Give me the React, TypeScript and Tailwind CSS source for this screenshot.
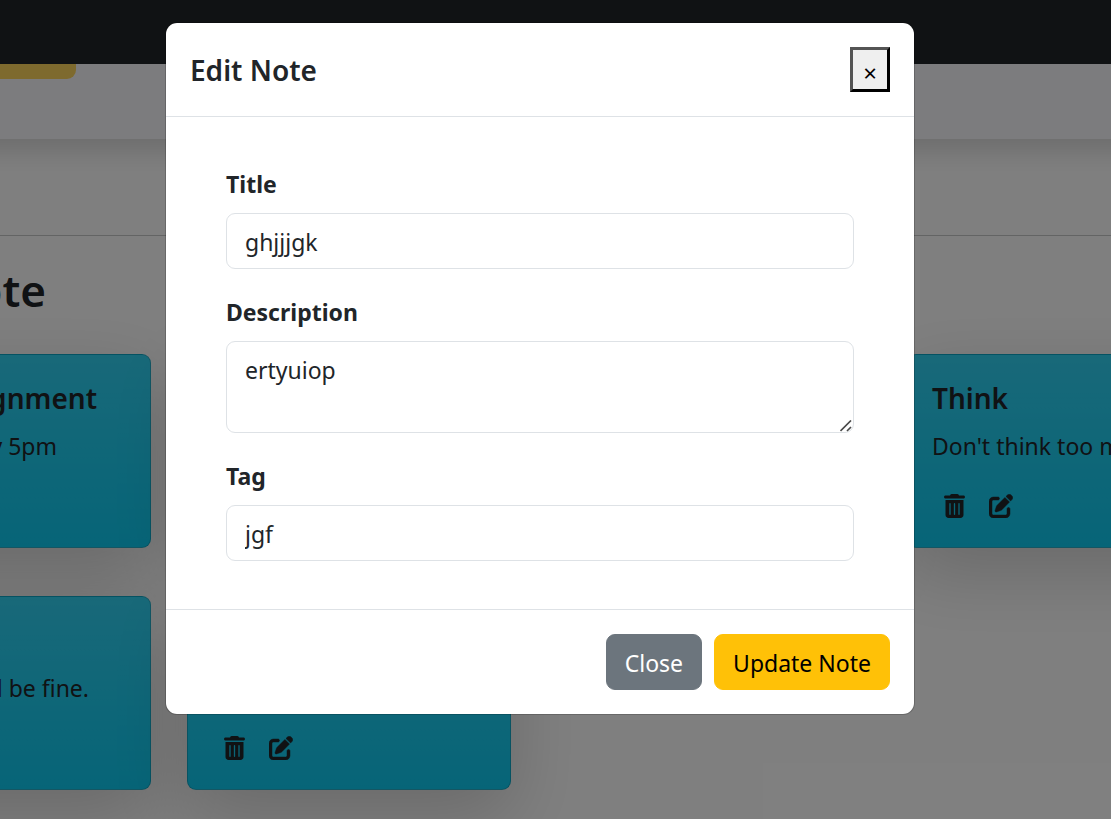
import React from "react";
import { FaPenToSquare } from "react-icons/fa6";

type Note = { title: string; text: string; inset?: string; textInset?: string };

const notes: Note[] = [
  { title: "Assignment", text: "by 5pm", inset: "text-right pr-[29px]", textInset: "text-right pr-[69px]" },
  { title: "Edit", text: "Note" },
  { title: "Note", text: "Note" },
  { title: "Think", text: "Don't think too much" },
  { title: "Note", text: "It will be fine.", inset: "text-left", textInset: "text-right pr-[37px]" },
  { title: "ghjjjgk", text: "ertyuiop" },
];

function TrashIcon() {
  return (
    <svg aria-hidden="true" viewBox="0 0 448 512" className="h-6 w-[21px]" fill="currentColor">
      <path d="M135 18C141 7 152 0 164 0h120c12 0 23 7 29 18l7 14h96c18 0 32 14 32 32s-14 32-32 32H32C14 96 0 82 0 64s14-32 32-32h96z" />
      <path
        fillRule="evenodd"
        d="M32 128h384v320c0 35-29 64-64 64H96c-35 0-64-29-64-64zM128 192c-8 0-14 6-14 14v228c0 8 6 14 14 14s14-6 14-14V206c0-8-6-14-14-14zM224 192c-8 0-14 6-14 14v228c0 8 6 14 14 14s14-6 14-14V206c0-8-6-14-14-14zM320 192c-8 0-14 6-14 14v228c0 8 6 14 14 14s14-6 14-14V206c0-8-6-14-14-14z"
      />
    </svg>
  );
}

function NoteCard({ note }: { note: Note }) {
  return (
    <article className="h-[194px] rounded-[9px] border border-black/18 bg-[#0dcaf0] bg-linear-to-b from-white/15 to-transparent px-6 pt-[25px] shadow-[0_24px_72px_rgba(0,0,0,0.175)]">
      <h5 className={`mb-3 text-[28px] font-semibold leading-9 whitespace-nowrap ${note.inset ?? ""}`}>{note.title}</h5>
      <p className={`mb-[30px] text-[23px] leading-9 whitespace-nowrap ${note.textInset ?? ""}`}>{note.text}</p>
      <div className="flex gap-6 pl-3">
        <button type="button" aria-label="Delete note"><TrashIcon /></button>
        <button type="button" aria-label="Edit note"><FaPenToSquare strokeWidth={10} className="size-6" /></button>
      </div>
    </article>
  );
}

function Field({ id, label, children }: { id: string; label: string; children: React.ReactNode }) {
  return (
    <div>
      <label htmlFor={id} className="mb-[11px] block text-[23px] font-bold leading-9">{label}</label>
      {children}
    </div>
  );
}

const control =
  "block w-full rounded-[9px] border border-[#dee2e6] bg-white px-[18px] pt-[10px] pb-2 text-[23px] leading-9 text-[#212529] outline-none";

const action = "rounded-[9px] border px-[18px] pt-[10px] pb-2 text-[23px] leading-9";

export default function App() {
  return (
    <div className="relative h-screen overflow-hidden bg-white font-['Noto_Sans','Open_Sans',sans-serif] text-[#212529]">
      <header className="h-16 bg-[#212529]" />
      <section className="-mx-12 h-[75px] bg-[#f9f9fd] px-12 shadow-[0_12px_24px_rgba(0,0,0,0.15)]">
        <button type="button" disabled aria-label="Add note" className="block h-[15px] w-[76px] rounded-br-[9px] bg-[#ffc107] opacity-65" />
      </section>
      <hr className="mt-24 border-t border-[#212529] opacity-25" />
      <main className="-ml-[173px] pt-[25px]">
        <h2 className="mb-[35px] flex w-[219px] justify-end text-[44px] font-semibold leading-[58px] whitespace-nowrap">Your Note</h2>
        <div className="grid grid-cols-[repeat(4,324px)] gap-x-9 gap-y-12">
          {notes.map((note, i) => <NoteCard key={i} note={note} />)}
        </div>
      </main>

      <div className="absolute inset-0 flex items-start justify-center bg-black/50 pt-[22px] pr-[31px]">
        <div role="dialog" aria-modal="true" aria-labelledby="dialog-title" className="w-full max-w-[750px] rounded-xl border border-black/18 bg-white bg-clip-padding">
          <div className="flex items-center justify-between border-b border-[#dee2e6] p-6">
            <h5 id="dialog-title" className="pt-px text-[28px] font-semibold leading-[44px]">Edit Note</h5>
            <button type="button" aria-label="Close dialog" className="h-[45px] w-10 border-3 border-black bg-[#efefef] pt-[5px] text-2xl leading-9 text-black [border-style:outset]">
              <span aria-hidden="true">×</span>
            </button>
          </div>
          <form className="flex flex-col gap-[25px] px-[60px] pt-[49px] pb-12">
            <Field id="title" label="Title">
              <input id="title" type="text" defaultValue="ghjjjgk" className={control} />
            </Field>
            <Field id="description" label="Description">
              <div className="relative">
                <textarea id="description" rows={2} defaultValue="ertyuiop" className={`${control} resize-none`} />
                <svg aria-hidden="true" viewBox="0 0 12 12" className="pointer-events-none absolute right-[2px] bottom-px size-3" fill="none" stroke="#4a4a4a" strokeWidth="1.7">
                  <path d="M.5 11 11 .5M7 11l4-4" />
                </svg>
              </div>
            </Field>
            <Field id="tag" label="Tag">
              <input id="tag" type="text" defaultValue="jgf" className={control} />
            </Field>
          </form>
          <div className="flex justify-end gap-3 border-t border-[#dee2e6] p-6">
            <button type="button" className={`${action} border-[#6c757d] bg-[#6c757d] text-white`}>Close</button>
            <button type="button" className={`${action} border-[#ffc107] bg-[#ffc107] text-black`}>Update Note</button>
          </div>
        </div>
      </div>
    </div>
  );
}
